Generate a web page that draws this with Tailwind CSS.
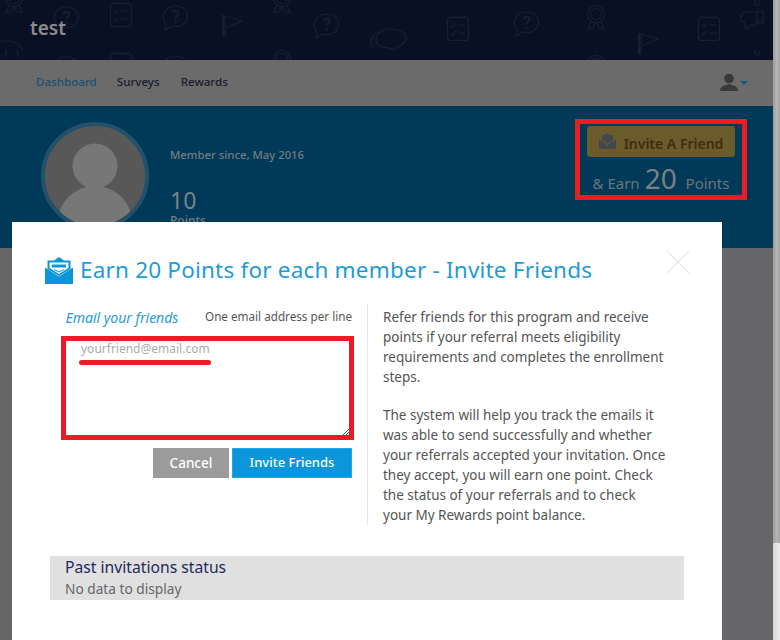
<!DOCTYPE html>
<html lang="en">
<head>
<meta charset="UTF-8">
<title>Invite Friends</title>
<script src="https://cdn.jsdelivr.net/npm/@tailwindcss/browser@4"></script>
</head>
<body class="font-['Noto_Sans',sans-serif] overflow-hidden">
<div class="relative h-[640px] w-[780px] overflow-hidden bg-[#666668]">
  <div class="mr-[7px]">
    <!-- header -->
    <header class="relative h-[60px] overflow-hidden bg-[#0a1023]">
      <svg class="absolute inset-0 h-[60px] w-[773px]" viewBox="0 0 773 60" fill="none" stroke="#191f33" stroke-width="1.2">
        <defs>
          <g id="bubble"><path d="M4 19.500C-2 12 3 1 13 1s14 7 12 13-9 9-15 7l-7 4z"/><path d="M10.500 8c1-3 6-3 6 0 0 2.500-3 2.500-3 5.500M13.500 15.500v2.500" stroke-width="1.800"/></g>
          <g id="notes"><rect x="0.500" y="2.500" width="21" height="23" rx="3"/><path d="M3 0.500v3M6 0.500v3M9 0.500v3M12 0.500v3M15 0.500v3M18 0.500v3"/><path d="M4 10l2 2 3-4M4 18l2 2 3-4M11 10h7M11 18h7"/></g>
          <g id="flag"><path d="M1.500 22V1.500l18 5.500-16 7"/><path d="M0.500 1v21h2.500V2"/></g>
          <g id="rosette"><circle cx="9" cy="9" r="8.500"/><circle cx="9" cy="9" r="5.500"/><path d="M4 16l-3 8 5-1 3-6 3 6 5 1-3-8"/></g>
        </defs>
        <use href="#rosette" x="5" y="-11"/>
        <use href="#bubble" x="53" y="6"/>
        <use href="#notes" x="110" y="1"/>
        <use href="#bubble" x="162" y="5"/>
        <use href="#flag" x="222" y="14"/>
        <use href="#rosette" x="273" y="-11"/>
        <use href="#bubble" x="313" y="13"/>
        <use href="#bubble" x="53" y="56"/>
        <use href="#notes" x="110" y="51"/>
        <use href="#bubble" x="162" y="55"/>
        <use href="#rosette" x="273" y="50"/>
        <path d="M0 42c9-3 20 0 23 9M7 50l-2 8M17 50l2 8"/>
        <path d="M382 32c-6 0-11 4-11 9 0 3 1 6 3 8M390 29c-8 0-14 5-14 10s4 9 12 9c3 0 4 1 6 2 2 0 2-2 1-2 4-1 11-5 11-10 0-6-7-9-16-9z"/>
        <use href="#notes" x="447" y="15"/>
        <use href="#bubble" x="513" y="11"/>
        <use href="#rosette" x="587" y="5"/>
        <use href="#flag" x="638" y="32"/>
        <use href="#notes" x="698" y="15"/>
        <use href="#rosette" x="587" y="55"/>
        <path d="M743 12h14v13h-6l-4 3-1 1-2-7-3-1c-1-4 1-7 2-9zM757 11h6v12h-6"/>
        <path d="M755 0v5h4V0M755 50v5h4v-5"/>
      </svg>
      <div class="relative pl-[30px] pt-[15px] text-[19px] leading-[26px] font-semibold text-[#8d8d8d]">test</div>
    </header>
    <!-- nav -->
    <nav class="flex h-[46px] items-center bg-[#6b6b6b] pb-[2px] pl-[36px] pr-[25px] text-[11.600px] font-medium">
      <a class="text-[#1c4f70]">Dashboard</a>
      <a class="ml-[20px] text-[#1c1c2c]">Surveys</a>
      <a class="ml-[21px] text-[#1c1c2c]">Rewards</a>
      <div class="ml-auto flex items-center gap-[2px]">
        <svg class="h-[18px] w-[18px]" viewBox="0 0 18 18" fill="#3a3a3a"><circle cx="9" cy="5.500" r="4.800"/><path d="M0 18c0-4 3-5 6-6l3-1 3 1c3 1 6 2 6 6z"/></svg>
        <span class="mt-[2px] h-0 w-0 border-x-4 border-t-4 border-x-transparent border-t-[#0e5a85]"></span>
      </div>
    </nav>
    <!-- profile band -->
    <section class="flex h-[142px] bg-[#003a58] pl-[41px] pr-[26px]">
      <div class="mt-[16px] flex h-[108px] w-[108px] shrink-0 items-start justify-center overflow-hidden rounded-full border-4 border-[#23506b] bg-[#585858]">
        <svg class="h-[100px] w-[100px]" viewBox="0 0 100 100" fill="#777"><circle cx="50" cy="40" r="22.500"/><ellipse cx="50" cy="96" rx="37" ry="36"/></svg>
      </div>
      <div class="ml-[21px] flex flex-col">
        <p class="mt-[41px] text-[11.300px] leading-[16px] font-medium text-[#747c82]">Member since, May 2016</p>
        <p class="mt-[24px] text-[23px] leading-[27px] text-[#7b8388]">10</p>
        <p class="text-[12px] leading-[14px] font-medium text-[#747c82]">Points</p>
      </div>
      <div class="ml-auto mt-[13px] flex h-[81px] w-[172px] flex-col items-center border-[5px] border-[#ed1c24] pt-[2px]">
        <button class="flex h-[31px] w-[148px] shrink-0 items-center justify-center gap-[8px] rounded-[3px] bg-[#6b5a2a] pt-[3px] text-[14px] font-semibold text-[#3b2e10]">
          <svg class="mb-[4px] h-[16px] w-[17px]" viewBox="0 0 17 16" fill="#44474d"><path d="M8.500 0L11 2h3v5l-5.500 4L3 7V2h3z"/><path d="M0 6l8.500 6.500L17 6v10H0z"/></svg>
          Invite A Friend
        </button>
        <p class="mt-[4px] flex shrink-0 items-baseline text-[15px] leading-[34px] text-[#6f7478]">&amp; Earn <span class="mx-[5px] text-[28px] text-[#7b7f82]">20</span>&nbsp;Points</p>
      </div>
    </section>
  </div>
  <!-- scrollbar -->
  <div class="absolute inset-y-0 right-0 w-[7px] bg-gradient-to-r from-[#d8d8d8] to-[#ececec]">
    <div class="h-[543px] w-[7px] bg-gradient-to-r from-[#9c9c9c] via-[#b4b4b4] to-[#a4a4a4]"></div>
  </div>
  <!-- modal -->
  <div class="absolute left-[12px] top-[222px] h-[418px] w-[710px] bg-white">
    <svg class="absolute right-[32px] top-[28px] h-[24px] w-[24px]" viewBox="0 0 24 24" stroke="#dedede" fill="none"><path d="M1 1l22 22M23 1L1 23"/></svg>
    <div class="flex items-center pl-[33px] pt-[33px]">
      <svg class="h-[27px] w-[28px]" viewBox="0 0 28 27" fill="#0a96d8">
        <path d="M14 0l5 3.500h6.500V12L14 19 2.500 12V3.500H9z"/>
        <path d="M4.500 5.500h19V11L14 17 4.500 11z" fill="#fff"/>
        <path d="M7 7.500h14v3H7z"/>
        <path d="M9 12.500l5 2.500 5-2.500" fill="none" stroke="#0a96d8"/>
        <path d="M0 10.500l14 9 14-9V27H0z"/>
      </svg>
      <h1 class="ml-[7px] text-[22.500px] leading-[30px] tracking-[0.2px] text-[#1f9bd9]">Earn 20 Points for each member - Invite Friends</h1>
    </div>
    <div class="mt-[19px] flex">
      <div class="ml-[50px] w-[290px]">
        <div class="flex h-[26px] items-center justify-between pl-[3.500px]">
          <span class="text-[14px] italic text-[#1f9bd9]">Email your friends</span>
          <span class="text-[11.700px] text-[#555]">One email address per line</span>
        </div>
        <div class="relative ml-[-1px] mr-[-2px] mt-[6px] h-[104px] border-[5px] border-[#ed1c24]">
          <p class="pl-[15px] text-[12px] leading-[15px] text-[#aaa]">yourfriend@email.com</p>
          <div class="ml-[13px] mt-[4px] h-[5px] w-[132px] rounded-full bg-[#ed1c24]"></div>
          <svg class="absolute bottom-0 right-0 h-[7px] w-[7px]" viewBox="0 0 7 7" stroke="#555" fill="none"><path d="M1 7l6-6M4 7l3-3"/></svg>
        </div>
        <div class="mt-[8px] flex justify-end gap-[3px]">
          <button class="h-[30px] w-[76px] bg-[#9b9b9b] text-[13.500px] font-medium text-white">Cancel</button>
          <button class="h-[30px] w-[120px] border border-[#22a7ea] bg-[#0a96d8] text-[13px] font-medium text-white">Invite Friends</button>
        </div>
      </div>
      <div class="ml-[15px] w-[301px] border-l border-[#e6e6e6] pl-[15px] pt-[3px] text-[13.500px] leading-[20px] text-[#555]">
        <p>Refer friends for this program and receive points if your referral meets eligibility requirements and completes the enrollment steps.</p>
        <p class="mt-[18px]">The system will help you track the emails it was able to send successfully and whether your referrals accepted your invitation. Once they accept, you will earn one point. Check the status of your referrals and to check your My Rewards point balance.</p>
      </div>
    </div>
    <div class="ml-[38px] mt-[31px] h-[44px] w-[634px] bg-[#e0e0e0] pl-[15px] pt-[1px]">
      <h2 class="text-[15.700px] leading-[21px] text-[#1f2a5c]">Past invitations status</h2>
      <p class="text-[13.700px] leading-[21px] text-[#666]">No data to display</p>
    </div>
  </div>
</div>
</body>
</html>
